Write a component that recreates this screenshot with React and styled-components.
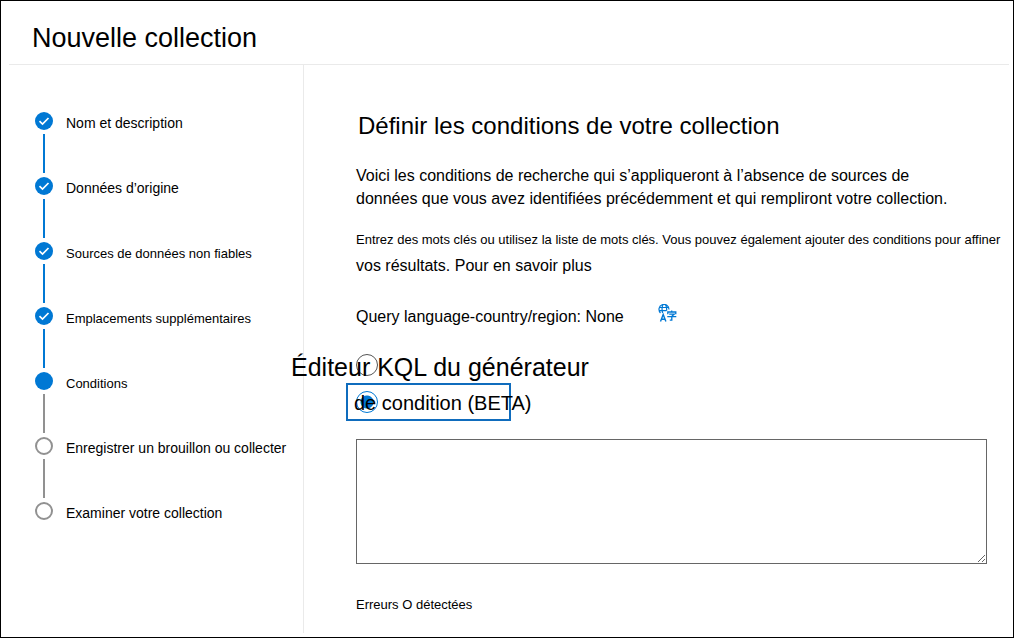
import React from "react";
import styled, { createGlobalStyle } from "styled-components";

const GlobalStyle = createGlobalStyle`
  * { box-sizing: border-box; }
  body {
    margin: 0;
    background: #fff;
    color: #000;
    font-family: "Liberation Sans", Arial, sans-serif;
    font-size: 14px;
  }
`;

const Frame = styled.div`
  display: flex;
  flex-direction: column;
  min-height: 100vh;
  border: 1px solid #000;
  padding: 0 4px 4px 8px;
`;

const Header = styled.header`
  padding: 21px 24px 9px 23px;
  border-bottom: 1px solid #eaeaea;
`;

const Title = styled.h1`
  margin: 0;
  font-size: 27px;
  line-height: 33px;
  font-weight: 400;
`;

const Body = styled.div`
  display: flex;
  flex: 1;
`;

const Sidebar = styled.nav`
  flex: 0 0 295px;
  padding: 47px 8px 0 26px;
  border-right: 1px solid #eaeaea;
`;

const StepList = styled.ol`
  list-style: none;
  margin: 0;
  padding: 0;
`;

const Step = styled.li`
  display: flex;
  gap: 13px;
  height: 65px;
`;

const StepTrack = styled.div`
  display: flex;
  flex-direction: column;
  align-items: center;
  gap: 4px;
  width: 18px;
`;

const StepDot = styled.span`
  display: flex;
  flex: none;
  width: 18px;
  height: 18px;
  border-radius: 50%;
  background: ${(p) => (p.$state === "todo" ? "#fff" : "#0078d4")};
  border: ${(p) => (p.$state === "todo" ? "2px solid #919191" : "0")};
`;

const StepLine = styled.span`
  width: 2px;
  height: 39px;
  background: ${(p) => (p.$done ? "#0078d4" : "#919191")};
`;

const StepLabel = styled.span`
  padding-top: ${(p) => (p.$compact ? "4px" : "3px")};
  font-size: ${(p) => (p.$compact ? "13px" : "14px")};
  line-height: 16px;
  white-space: nowrap;
`;

const Main = styled.main`
  flex: 1;
  min-width: 0;
  padding: 46px 22px 0 52px;
`;

const Heading = styled.h2`
  margin: 0 0 23px;
  padding-left: 2px;
  font-size: 24px;
  line-height: 30px;
  font-weight: 400;
`;

const Intro = styled.p`
  max-width: 600px;
  margin: 0 0 17px;
  font-size: 16px;
  line-height: 23px;
`;

const Hint = styled.p`
  margin: 0;
  font-size: 13px;
  line-height: 26px;
  white-space: nowrap;
`;

const HintEnd = styled.span`
  display: block;
  font-size: 16px;
`;

const LanguageRow = styled.div`
  display: flex;
  align-items: flex-start;
  gap: 34px;
  margin-top: 25px;
  font-size: 16px;
  line-height: 26px;
`;

const IconButton = styled.button`
  display: flex;
  padding: 0;
  border: 0;
  background: none;
  color: #0078d4;
`;

const Options = styled.fieldset`
  margin: 17px 0 18px -10px;
  padding: 0;
  border: 0;
`;

const Option = styled.label`
  position: relative;
  display: flex;
  align-items: center;
  width: 165px;
  height: ${(p) => (p.$selected ? "38px" : "36px")};
  padding-left: ${(p) => (p.$selected ? "8px" : "10px")};
  border: ${(p) => (p.$selected ? "2px solid #0f6cbd" : "0")};
`;

const Radio = styled.input`
  appearance: none;
  width: 22px;
  height: 22px;
  margin: 0;
  border: 1px solid #555;
  border-radius: 50%;

  &:checked {
    border-color: #0078d4;
    background: radial-gradient(circle, #0078d4 6px, #fff 7px);
  }
`;

const OptionText = styled.span`
  position: absolute;
  top: 50%;
  left: ${(p) => (p.$large ? "-55px" : "6px")};
  transform: translateY(-50%);
  padding-top: ${(p) => (p.$large ? "4px" : "2px")};
  font-size: ${(p) => (p.$large ? "25px" : "20px")};
  white-space: nowrap;
`;

const QueryBox = styled.textarea`
  display: block;
  width: 100%;
  height: 125px;
  border: 1px solid #666;
  background: #fff;
`;

const Errors = styled.p`
  margin: 32px 0 0;
  font-size: 13px;
  line-height: 18px;
`;

const steps = [
  { label: "Nom et description", state: "done" },
  { label: "Données d’origine", state: "done" },
  { label: "Sources de données non fiables", state: "done", compact: true },
  { label: "Emplacements supplémentaires", state: "done", compact: true },
  { label: "Conditions", state: "current", compact: true },
  { label: "Enregistrer un brouillon ou collecter", state: "todo" },
  { label: "Examiner votre collection", state: "todo" },
];

const Check = () => (
  <svg width="18" height="18" viewBox="0 0 18 18" fill="none" aria-hidden="true">
    <path d="M4.5 9.2 7.5 12 13.5 6" stroke="#fff" strokeWidth="1.7" />
  </svg>
);

const LanguageIcon = () => (
  <svg width="19" height="19" viewBox="0 0 19 19" fill="none" stroke="currentColor" aria-hidden="true">
    <path d="M2.5 9A5 5 0 1 1 11 5.500M1.500 3.500h9.500M1.500 6.700h7M5 .7C3.800 3 3.800 6 4.600 9M7.500 .7c1.200 2 1.300 4 1.100 6" strokeWidth="1.2" />
    <path d="M2.500 17.500 5.200 10.500 7.900 17.500M3.500 15.200h3.500" strokeWidth="1.4" />
    <path d="M13.700 6.500v1.500M9.800 10.300V8h8v2.300M11.200 10.200h5l-2.400 2M9.300 12.700h9M13.800 12.500V16.200h-2" strokeWidth="1.300" />
  </svg>
);

export default function App() {
  return (
    <>
      <GlobalStyle />
      <Frame>
        <Header>
          <Title>Nouvelle collection</Title>
        </Header>
        <Body>
          <Sidebar>
            <StepList>
              {steps.map((s, i) => (
                <Step key={s.label}>
                  <StepTrack>
                    <StepDot $state={s.state}>{s.state === "done" && <Check />}</StepDot>
                    {i < steps.length - 1 && <StepLine $done={s.state === "done"} />}
                  </StepTrack>
                  <StepLabel $compact={s.compact}>{s.label}</StepLabel>
                </Step>
              ))}
            </StepList>
          </Sidebar>
          <Main>
            <Heading>Définir les conditions de votre collection</Heading>
            <Intro>
              Voici les conditions de recherche qui s’appliqueront à l’absence de sources de
              données que vous avez identifiées précédemment et qui rempliront votre collection.
            </Intro>
            <Hint>
              Entrez des mots clés ou utilisez la liste de mots clés. Vous pouvez également ajouter
              des conditions pour affiner <HintEnd>vos résultats. Pour en savoir plus</HintEnd>
            </Hint>
            <LanguageRow>
              <span>Query language-country/region: None</span>
              <IconButton type="button" aria-label="Query language">
                <LanguageIcon />
              </IconButton>
            </LanguageRow>
            <Options>
              <Option>
                <Radio type="radio" name="editor" />
                <OptionText $large>Éditeur KQL du générateur</OptionText>
              </Option>
              <Option $selected>
                <Radio type="radio" name="editor" defaultChecked />
                <OptionText>de condition (BETA)</OptionText>
              </Option>
            </Options>
            <QueryBox aria-label="KQL" />
            <Errors>Erreurs O détectées</Errors>
          </Main>
        </Body>
      </Frame>
    </>
  );
}
